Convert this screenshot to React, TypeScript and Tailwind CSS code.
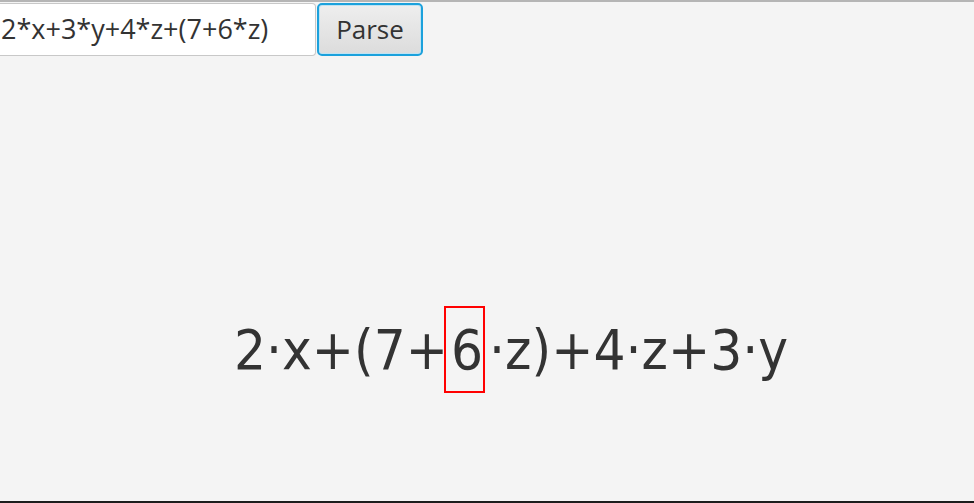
const formula = ["2", "·", "x", "+", "(", "7", "+", "6", "·", "z", ")", "+", "4", "·", "z", "+", "3", "·", "y"];

function Glyph({ c, marked }: { c: string; marked: boolean }) {
  if (marked) {
    return (
      <div className="-ml-[4px] mr-[4px] pl-[7px] pr-[2px] outline-2 outline-solid -outline-offset-2 outline-[#ff0000]">
        {c}
      </div>
    );
  }
  return <span>{c}</span>;
}

export default function App() {
  return (
    <div className="flex h-[503px] w-[974px] flex-col overflow-hidden border-t-2 border-b-2 border-t-[#b5b5b5] border-b-[#1c1c1c] bg-[#f4f4f4] font-['Open_Sans',sans-serif]">
      <div className="flex items-start gap-px pt-px">
        <div className="flex h-[53px] w-[316px] items-center rounded-r-[4px] border border-l-0 border-[#c8c8c8] bg-white pl-[1px] text-[27px] text-[#333333]">
          2*x+3*y+4*z+(7+6*z)
        </div>
        <button className="h-[53px] w-[106px] rounded-[5px] border-2 border-[#1ba1dc] bg-gradient-to-b from-[#eeeeee] to-[#dcdcdc] text-[26px] text-[#333333] shadow-[inset_0_0_0_1px_#bfe3f3]">
          Parse
        </button>
      </div>
      <div className="flex flex-1 items-start justify-center pt-[250px] pl-[48px]">
        <div className="flex items-center font-['DejaVu_Sans_Condensed','DejaVu_Sans',sans-serif] font-stretch-condensed text-[56px] leading-[87px] text-[#333333]">
          {formula.map((c, i) => (
            <Glyph key={i} c={c} marked={i === 7} />
          ))}
        </div>
      </div>
    </div>
  );
}
